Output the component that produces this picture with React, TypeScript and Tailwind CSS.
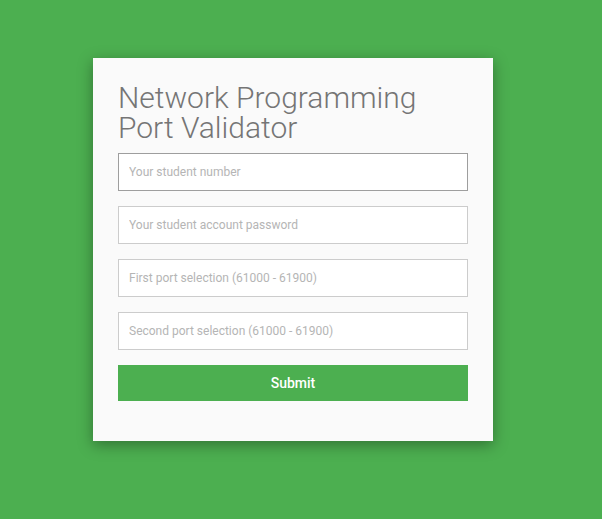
export default function App() {
  const fields = [
    { placeholder: 'Your student number', type: 'text', active: true },
    { placeholder: 'Your student account password', type: 'password', active: false },
    { placeholder: 'First port selection (61000 - 61900)', type: 'text', active: false },
    { placeholder: 'Second port selection (61000 - 61900)', type: 'text', active: false },
  ];

  return (
    <div
      className="min-h-[519px] w-full bg-[#4caf50] pt-[58px] pl-[93px]"
      style={{ fontFamily: 'Roboto, "Liberation Sans", sans-serif' }}
    >
      <div className="w-[400px] bg-[#fafafa] px-[25px] pt-[25px] pb-[40px] shadow-[0_4px_14px_rgba(0,0,0,0.35)]">
        <h1 className="text-[30px] leading-[30px] font-light text-[#757575]">
          Network Programming
          <br />
          Port Validator
        </h1>
        <form className="mt-[10px] flex flex-col gap-[15px]" onSubmit={(e) => e.preventDefault()}>
          {fields.map((f) => (
            <input
              key={f.placeholder}
              type={f.type}
              placeholder={f.placeholder}
              className={`h-[38px] w-full border bg-white px-[10px] text-[12px] text-[#555] outline-none placeholder:text-[#b5b5b5] ${
                f.active ? 'border-[#9e9e9e]' : 'border-[#cccccc]'
              }`}
            />
          ))}
          <button
            type="submit"
            className="h-[36px] w-full bg-[#4caf50] text-[14px] font-medium text-white"
          >
            Submit
          </button>
        </form>
      </div>
    </div>
  );
}
